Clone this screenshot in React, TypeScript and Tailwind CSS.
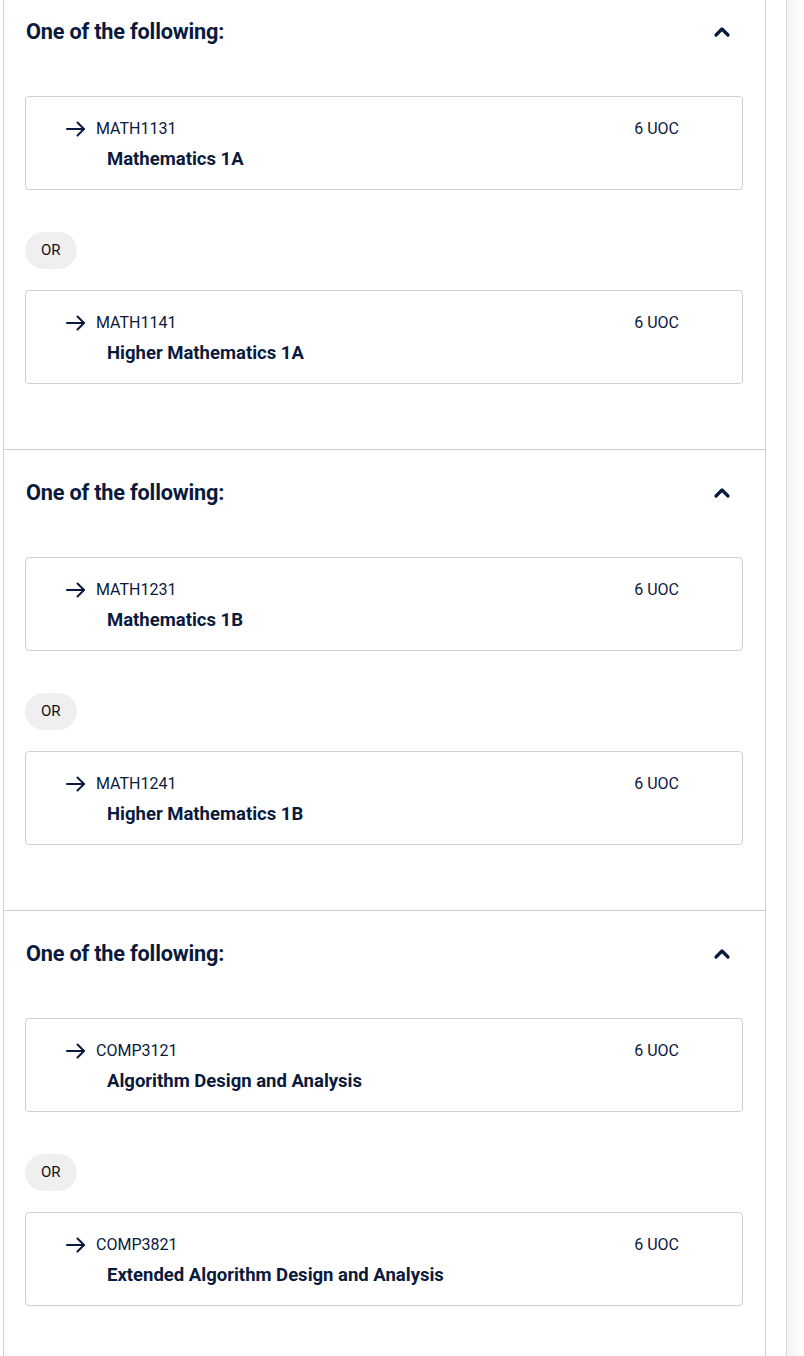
import { ChevronUp } from "lucide-react";

type Course = { code: string; title: string; uoc: number };

const groups: Course[][] = [
  [
    { code: "MATH1131", title: "Mathematics 1A", uoc: 6 },
    { code: "MATH1141", title: "Higher Mathematics 1A", uoc: 6 },
  ],
  [
    { code: "MATH1231", title: "Mathematics 1B", uoc: 6 },
    { code: "MATH1241", title: "Higher Mathematics 1B", uoc: 6 },
  ],
  [
    { code: "COMP3121", title: "Algorithm Design and Analysis", uoc: 6 },
    { code: "COMP3821", title: "Extended Algorithm Design and Analysis", uoc: 6 },
  ],
];

function Arrow() {
  return (
    <svg width="20" height="16" viewBox="0 0 20 16" fill="none" stroke="currentColor" strokeWidth="2" strokeLinecap="round" strokeLinejoin="round">
      <path d="M1 8h17" />
      <path d="M11.5 1.5L18 8l-6.5 6.5" />
    </svg>
  );
}

function CourseCard({ course }: { course: Course }) {
  return (
    <div className="border border-[#d0d0d0] rounded-[4px] pl-[40px] pr-[63px] pt-5 pb-4">
      <div className="flex items-center justify-between h-6">
        <div className="flex items-center gap-[10px]">
          <Arrow />
          <span className="text-[16px]">{course.code}</span>
        </div>
        <span className="text-[16px]">{course.uoc} UOC</span>
      </div>
      <p className="mt-1 ml-[41px] text-[18.5px] leading-7 font-bold">{course.title}</p>
    </div>
  );
}

function Group({ courses, first }: { courses: Course[]; first: boolean }) {
  return (
    <section className={`pl-[21px] pr-[22px] pt-[27px] pb-[65px] ${first ? "" : "border-t border-[#d0d0d0]"}`}>
      <div className="flex items-center justify-between h-8">
        <h3 className="text-[21.7px] font-bold tracking-[-0.2px] ml-px">One of the following:</h3>
        <ChevronUp className="w-6 h-6 mr-[9px]" strokeWidth={3.2} />
      </div>
      <div className="mt-[48px]">
        {courses.map((c, i) => (
          <div key={c.code}>
            {i > 0 && (
              <div className="mt-[42px] mb-[21px] flex">
                <span className="h-[37px] px-4 rounded-full bg-[#efefef] flex items-center text-[15px] text-[#111]">
                  OR
                </span>
              </div>
            )}
            <CourseCard course={c} />
          </div>
        ))}
      </div>
    </section>
  );
}

export default function App() {
  return (
    <div
      className="flex h-[1356px] overflow-hidden bg-white text-[#0a1a3d]"
      style={{ fontFamily: "Roboto, 'Liberation Sans', sans-serif" }}
    >
      <div className="ml-[3px] w-[763px] border-l border-r border-[#d0d0d0] -mt-[11px]">
        {groups.map((g, i) => (
          <Group key={i} courses={g} first={i === 0} />
        ))}
      </div>
      <div className="ml-[20px] flex-1 border-l border-[#d6d6d6] bg-gradient-to-r from-[#f3f3f3] to-white" />
    </div>
  );
}
